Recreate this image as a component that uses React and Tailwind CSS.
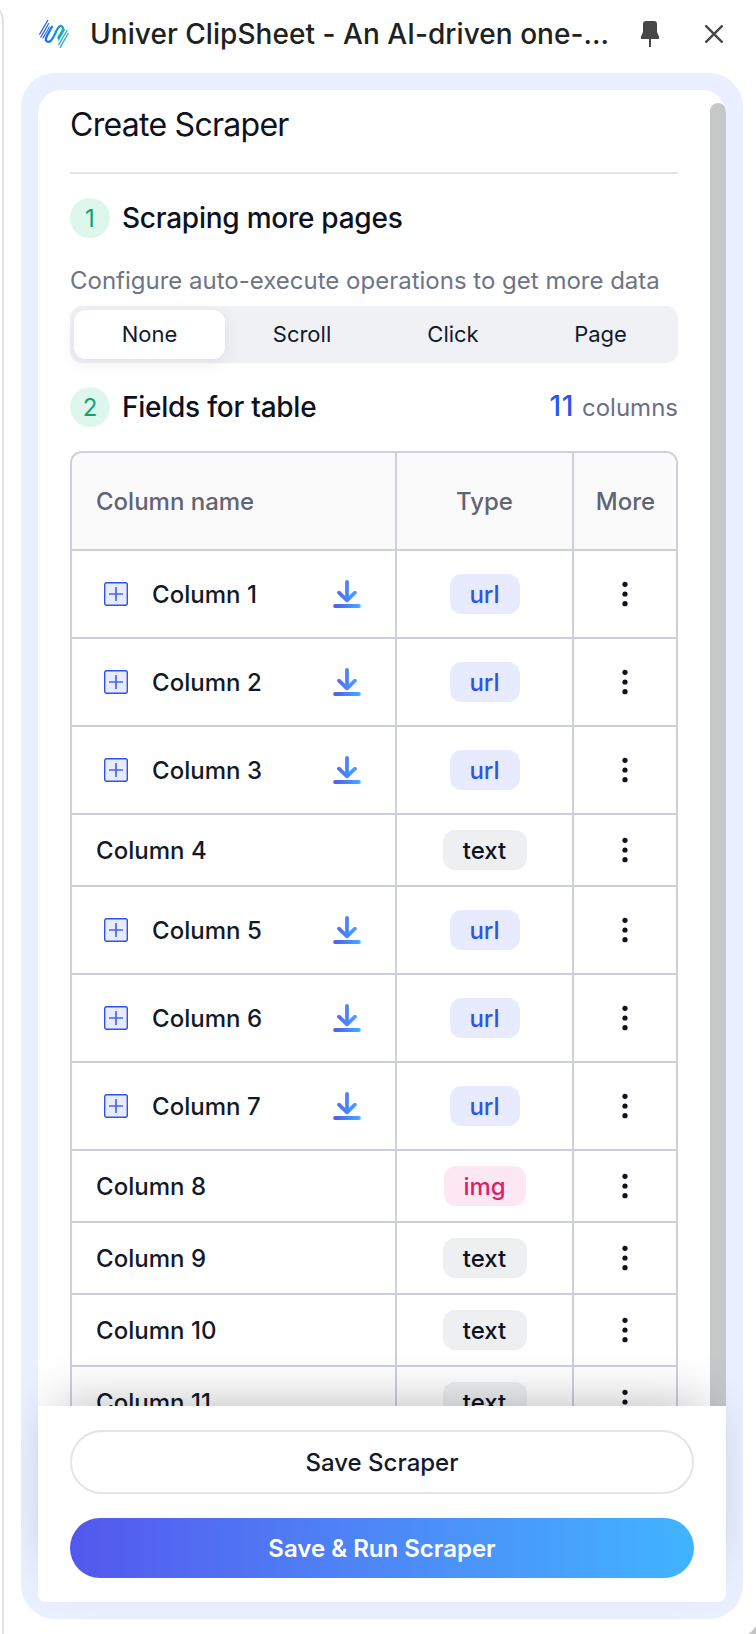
const rows = [
  { name: 'Column 1', type: 'url' },
  { name: 'Column 2', type: 'url' },
  { name: 'Column 3', type: 'url' },
  { name: 'Column 4', type: 'text' },
  { name: 'Column 5', type: 'url' },
  { name: 'Column 6', type: 'url' },
  { name: 'Column 7', type: 'url' },
  { name: 'Column 8', type: 'img' },
  { name: 'Column 9', type: 'text' },
  { name: 'Column 10', type: 'text' },
  { name: 'Column 11', type: 'text' },
];

const badgeStyles = {
  url: 'w-[70px] bg-[#e8ebff] text-[#2c53f1]',
  text: 'w-[84px] bg-[#eeeff1] text-[#0e111e]',
  img: 'w-[82px] bg-[#fce7f3] text-[#db1f68]',
};

function Logo() {
  return (
    <svg width="32" height="30" viewBox="0 0 32 30" fill="none" strokeLinecap="round">
      <defs>
        <linearGradient id="logo" x1="2" y1="0" x2="30" y2="0" gradientUnits="userSpaceOnUse">
          <stop offset="0" stopColor="#2b4df5" />
          <stop offset="0.5" stopColor="#148ee6" />
          <stop offset="1" stopColor="#1fc09a" />
        </linearGradient>
      </defs>
      <g stroke="url(#logo)">
        <path strokeWidth="1.2" d="M9.8 1.4L1.6 15.2M10.6 4.6L2.8 18.2M11.4 8L5 19M30.2 14.4L22.2 28.4M29.2 11.2L20.8 25.6M26.6 10.4L20.6 21" />
        <path strokeWidth="2.3" d="M14 7.8L9.2 16.4C6.8 20.6 7.8 22.8 10.4 22.8C13 22.8 13.8 20.8 15.2 18.4L18.6 11.6C20 8.8 20.8 7 22.8 7C25.2 7 25.6 9.6 24 12.6L20.4 18.8" />
      </g>
    </svg>
  );
}

function DownloadIcon() {
  return (
    <svg width="32" height="32" viewBox="0 0 32 32" fill="none" strokeWidth="3.8" strokeLinecap="round" strokeLinejoin="round">
      <defs>
        <linearGradient id="arrow" x1="6" y1="0" x2="26" y2="0" gradientUnits="userSpaceOnUse">
          <stop stopColor="#4f6af2" />
          <stop offset="1" stopColor="#49a2ff" />
        </linearGradient>
        <linearGradient id="bar" x1="2" y1="0" x2="30" y2="0" gradientUnits="userSpaceOnUse">
          <stop stopColor="#5357ed" />
          <stop offset="1" stopColor="#40b0ff" />
        </linearGradient>
      </defs>
      <path stroke="url(#arrow)" d="M16 4V22M8 14.7L16 22.3L24 14.7" />
      <path stroke="url(#bar)" d="M4.1 28H27.9" />
    </svg>
  );
}

function ExpandIcon() {
  return (
    <svg width="24" height="24" viewBox="0 0 24 24" fill="none">
      <rect x="0.7" y="0.7" width="22.6" height="22.6" rx="2" fill="#e8ebff" stroke="#2c53f1" strokeWidth="1.4" />
      <path d="M12 5V19M5 12H19" stroke="#4766ec" strokeWidth="1.7" />
    </svg>
  );
}

function Dots() {
  return (
    <svg width="6" height="26" viewBox="0 0 6 26" fill="#10111d">
      <circle cx="3" cy="3.3" r="2.6" />
      <circle cx="3" cy="13" r="2.6" />
      <circle cx="3" cy="22.7" r="2.6" />
    </svg>
  );
}

function Step({ n, title }) {
  return (
    <div className="flex items-center gap-3">
      <span className="flex size-10 items-center justify-center rounded-full bg-[#def7ec] pt-px text-2xl text-[#0da471]">{n}</span>
      <h2 className="text-[28px] leading-10 font-medium tracking-[-0.25px] text-[#0e111e]">{title}</h2>
    </div>
  );
}

function Row({ name, type }) {
  const nested = type === 'url';
  return (
    <div className={`grid grid-cols-[323px_177px_104px] border-t-2 border-[#cdd0d8] ${nested ? 'h-[88px]' : 'h-[72px]'}`}>
      <div className="flex items-center pl-6">
        {nested && <span className="mr-6 ml-2"><ExpandIcon /></span>}
        <span className="pt-0.5 tracking-[0.04px]">{name}</span>
        {nested && <span className="mr-8 ml-auto"><DownloadIcon /></span>}
      </div>
      <div className="flex items-center justify-center border-l-2 border-[#cdd0d8]">
        <span className={`flex h-10 items-center justify-center rounded-xl pt-0.5 ${badgeStyles[type]}`}>{type}</span>
      </div>
      <div className="flex items-center justify-center border-l-2 border-[#cdd0d8]"><Dots /></div>
    </div>
  );
}

export default function App() {
  return (
    <div className="h-[1634px] w-[756px] overflow-hidden bg-[#c4c4c4]">
      <div className="flex h-[1637px] w-[759px] overflow-hidden rounded-br-[22px] bg-white font-['Inter',sans-serif]">
        <div className="flex w-1 shrink-0 justify-end overflow-hidden">
          <div className="w-10 shrink-0 rounded-tr-[22px] border-t-2 border-r-2 border-[#e1e1e1]" />
        </div>
        <div className="flex grow flex-col pr-4 pb-[18px] pl-[17px]">
          <header className="flex h-[73px] shrink-0 items-center pb-[5px] pl-[17px]">
            <Logo />
            <h1 className="ml-5 w-[527px] text-[28px] leading-9 font-medium tracking-[0.05px] whitespace-nowrap text-[#202222]">
              Univer ClipSheet - An AI-driven one-...
            </h1>
            <svg className="ml-6" width="18" height="26" viewBox="0 0 18 26" fill="#474747">
              <path d="M5 0H13Q16 0 16 3V11L18 15.5V18H10V26H8V18H0V15.5L2 11V3Q2 0 5 0Z" />
            </svg>
            <svg className="ml-[46px]" width="18" height="18" viewBox="0 0 18 18" stroke="#474747" strokeWidth="2.4">
              <path d="M0.4 0.4L17.6 17.6M17.6 0.4L0.4 17.6" />
            </svg>
          </header>

          <div className="flex min-h-0 grow flex-col overflow-hidden rounded-[34px] bg-[#eaf0ff] p-[17px]">
            <div className="flex h-[1316px] shrink-0 overflow-hidden rounded-t-3xl bg-white">
              <main className="w-[640px] shrink-0 pt-3 pl-8">
                <div className="h-[72px] border-b-2 border-[#e4e4ea] text-[#0e111e]">
                  <p className="pt-px text-[32px] leading-[44px] tracking-[-0.72px]">Create Scraper</p>
                </div>
                <div className="mt-6"><Step n="1" title="Scraping more pages" /></div>
                <p className="mt-[25px] text-2xl leading-9 whitespace-nowrap text-[#6d7585]">
                  Configure auto-execute operations to get more data
                </p>
                <div className="mt-[7px] flex h-[57px] items-center rounded-xl bg-[#f0f1f5] p-1 text-[22px] text-[#121a2c]">
                  <span className="flex h-[49px] w-[151px] items-center justify-center rounded-xl bg-white shadow-[0_4px_16px_rgba(20,20,50,0.08)]">None</span>
                  <span className="flex w-[154px] justify-center">Scroll</span>
                  <span className="flex w-[148px] justify-center">Click</span>
                  <span className="flex w-[147px] justify-center">Page</span>
                </div>
                <div className="mt-6 flex h-10 items-center justify-between">
                  <Step n="2" title="Fields for table" />
                  <p className="text-2xl text-[#6d7080]">
                    <span className="mr-2 text-[28px] font-medium tracking-[0.6px] text-[#2c53f1]">11</span>columns
                  </p>
                </div>
                <div className="mt-6 overflow-hidden rounded-t-xl border-2 border-[#cdd0d8] text-2xl font-medium text-[#121a2a]">
                  <div className="grid h-24 grid-cols-[323px_177px_104px] bg-[#fafafa] text-[#5f6476]">
                    <span className="flex items-center pt-0.5 pl-6">Column name</span>
                    <span className="flex items-center justify-center border-l-2 border-[#cdd0d8] pt-0.5">Type</span>
                    <span className="flex items-center justify-center border-l-2 border-[#cdd0d8] pt-0.5 pl-px">More</span>
                  </div>
                  {rows.map((r) => <Row key={r.name} {...r} />)}
                </div>
              </main>
              <div className="mt-[13px] ml-auto w-4 rounded-t-full bg-[#c6c7c9]" />
            </div>
            <footer className="relative flex h-[196px] shrink-0 flex-col gap-6 rounded-b-lg bg-white px-8 pt-6 text-2xl font-medium shadow-[0_-20px_50px_-20px_rgba(0,0,0,0.28)]">
              <button className="h-16 shrink-0 rounded-full border-2 border-[#e4e4ea] pt-0.5 text-[#121a2c]">Save Scraper</button>
              <button className="h-[60px] shrink-0 rounded-full bg-linear-to-r from-[#5357ed] to-[#40b4ff] pt-0.5 font-semibold text-white">Save &amp; Run Scraper</button>
            </footer>
          </div>
        </div>
      </div>
    </div>
  );
}
